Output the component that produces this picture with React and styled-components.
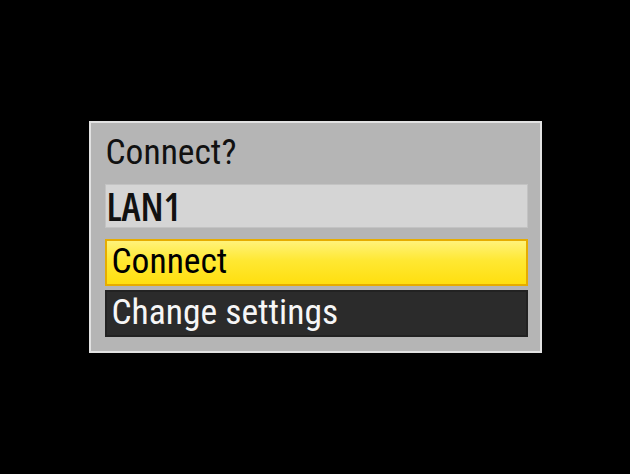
import React from "react";
import styled, { createGlobalStyle } from "styled-components";

const Global = createGlobalStyle`
  html, body { margin: 0; background: #000; }
  body {
    font-family: "Roboto Condensed", "Open Sans", sans-serif;
  }
`;

const Screen = styled.div`
  width: 630px;
  height: 474px;
  display: flex;
  align-items: center;
  justify-content: center;
  background: #000;
`;

const Dialog = styled.div`
  width: 453px;
  box-sizing: border-box;
  border: 2px solid #e2e2e2;
  background: #b5b5b5;
  padding: 0 12px 14px 14px;
  display: flex;
  flex-direction: column;
`;

const Title = styled.div`
  height: 61px;
  box-sizing: border-box;
  padding: 0 0 3px 1px;
  font-size: 35.5px;
  line-height: 58px;
  color: #111;
  white-space: nowrap;
`;

const NameField = styled.div`
  height: 44px;
  box-sizing: border-box;
  border: 1px solid #c3c3c3;
  background: #d5d5d5;
  padding-left: 1px;
  font-family: "Open Sans", sans-serif;
  font-size: 39px;
  line-height: 42px;
  font-weight: 600;
  font-stretch: 75%;
  color: #111;
  margin-bottom: 11px;
`;

const Options = styled.div`
  display: flex;
  flex-direction: column;
  gap: 4px;
`;

const Option = styled.div`
  height: 47px;
  box-sizing: border-box;
  border: 2px solid ${(p) => (p.$selected ? "#e6ac00" : "#222")};
  background: ${(p) =>
    p.$selected
      ? "linear-gradient(to bottom, #fff27a 0%, #ffe833 45%, #ffdf0f 100%)"
      : "#2b2b2b"};
  color: ${(p) => (p.$selected ? "#000" : "#f6f6f6")};
  padding: 0 5px 2px 5px;
  font-size: 35.5px;
  line-height: 41px;
  white-space: nowrap;
`;

export default function App() {
  return (
    <>
      <Global />
      <Screen>
        <Dialog>
          <Title>Connect?</Title>
          <NameField>LAN1</NameField>
          <Options>
            <Option $selected>Connect</Option>
            <Option>Change settings</Option>
          </Options>
        </Dialog>
      </Screen>
    </>
  );
}
